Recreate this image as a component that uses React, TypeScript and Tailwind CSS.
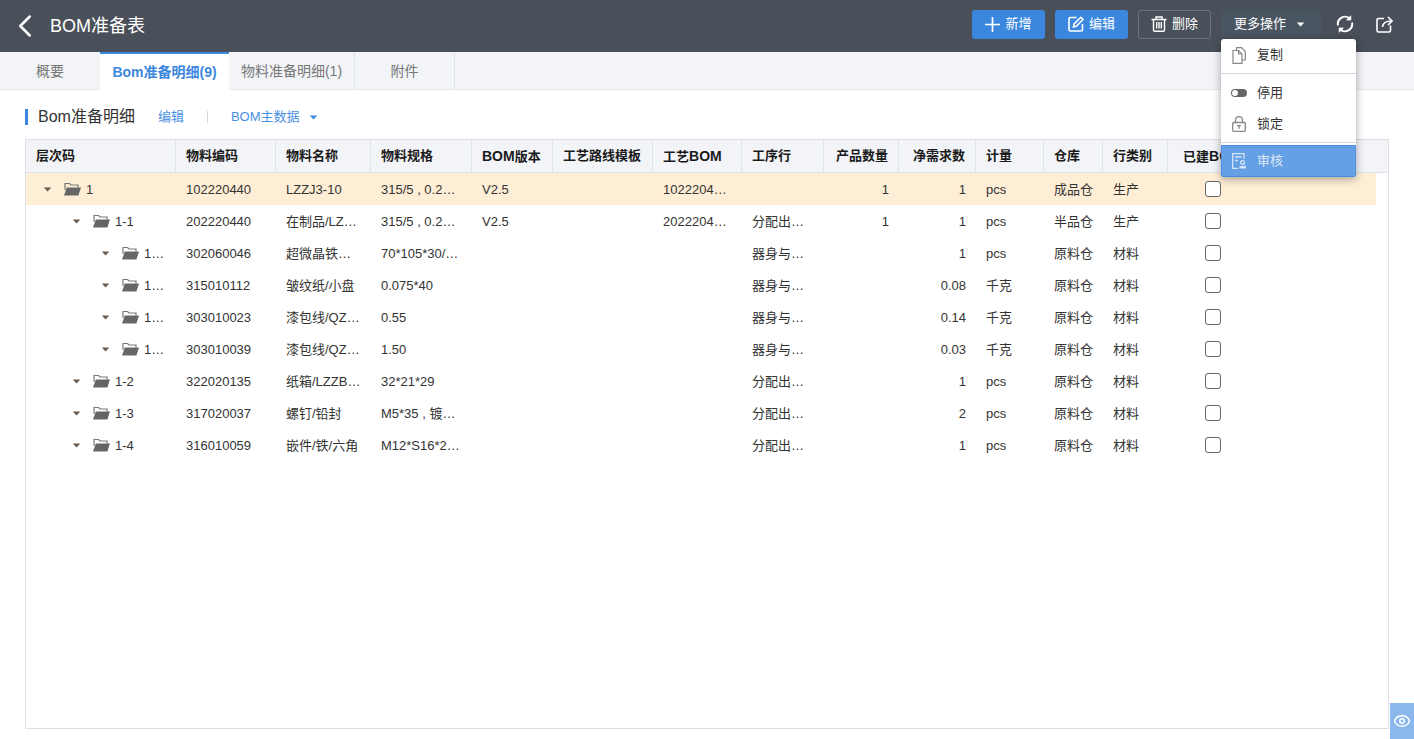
import { ChevronLeft, Eye } from 'lucide-react';

type Col = { label: string; key: string; width: string; right?: boolean };

const cols: Col[] = [
  { label: '物料编码', key: 'code', width: 'w-[100px]' },
  { label: '物料名称', key: 'name', width: 'w-[95px]' },
  { label: '物料规格', key: 'spec', width: 'w-[101px]' },
  { label: 'BOM版本', key: 'ver', width: 'w-[81px]' },
  { label: '工艺路线模板', key: 'route', width: 'w-[100px]' },
  { label: '工艺BOM', key: 'bom', width: 'w-[89px]' },
  { label: '工序行', key: 'proc', width: 'w-[82px]' },
  { label: '产品数量', key: 'qty', width: 'w-[75px]', right: true },
  { label: '净需求数', key: 'need', width: 'w-[77px]', right: true },
  { label: '计量', key: 'unit', width: 'w-[68px]' },
  { label: '仓库', key: 'wh', width: 'w-[59px]' },
  { label: '行类别', key: 'type', width: 'w-[65px]' },
];

type Row = Record<string, string> & { level: string };

const rows: Row[] = [
  { level: '1', tree: '1', code: '102220440', name: 'LZZJ3-10', spec: '315/5 , 0.25kV', ver: 'V2.5', route: '', bom: '102220440-1', proc: '', qty: '1', need: '1', unit: 'pcs', wh: '成品仓', type: '生产' },
  { level: '2', tree: '1-1', code: '202220440', name: '在制品/LZZJ3-10', spec: '315/5 , 0.25kV', ver: 'V2.5', route: '', bom: '202220440-1', proc: '分配出线装配', qty: '1', need: '1', unit: 'pcs', wh: '半品仓', type: '生产' },
  { level: '3', tree: '1-1-1', code: '302060046', name: '超微晶铁芯/环形', spec: '70*105*30/1K107', ver: '', route: '', bom: '', proc: '器身与铁芯装配', qty: '', need: '1', unit: 'pcs', wh: '原料仓', type: '材料' },
  { level: '3', tree: '1-1-2', code: '315010112', name: '皱纹纸/小盘', spec: '0.075*40', ver: '', route: '', bom: '', proc: '器身与铁芯装配', qty: '', need: '0.08', unit: '千克', wh: '原料仓', type: '材料' },
  { level: '3', tree: '1-1-3', code: '303010023', name: '漆包线/QZ-2/130', spec: '0.55', ver: '', route: '', bom: '', proc: '器身与铁芯装配', qty: '', need: '0.14', unit: '千克', wh: '原料仓', type: '材料' },
  { level: '3', tree: '1-1-4', code: '303010039', name: '漆包线/QZ-2/130', spec: '1.50', ver: '', route: '', bom: '', proc: '器身与铁芯装配', qty: '', need: '0.03', unit: '千克', wh: '原料仓', type: '材料' },
  { level: '2', tree: '1-2', code: '322020135', name: '纸箱/LZZB-10', spec: '32*21*29', ver: '', route: '', bom: '', proc: '分配出线装配', qty: '', need: '1', unit: 'pcs', wh: '原料仓', type: '材料' },
  { level: '2', tree: '1-3', code: '317020037', name: '螺钉/铅封', spec: 'M5*35 , 镀锌件', ver: '', route: '', bom: '', proc: '分配出线装配', qty: '', need: '2', unit: 'pcs', wh: '原料仓', type: '材料' },
  { level: '2', tree: '1-4', code: '316010059', name: '嵌件/铁/六角', spec: 'M12*S16*20*8', ver: '', route: '', bom: '', proc: '分配出线装配', qty: '', need: '1', unit: 'pcs', wh: '原料仓', type: '材料' },
];

const indents: Record<string, string> = {
  '1': 'pl-[17px]',
  '2': 'pl-[46px]',
  '3': 'pl-[75px]',
};

// the BOM letters in the header run wider than the 13px hanzi next to them
function HeaderLabel({ text }: { text: string }) {
  if (!text.includes('BOM')) return <>{text}</>;
  const [before, after] = text.split('BOM');
  return (
    <>
      {before}
      <span className="text-[14px]">BOM</span>
      {after}
    </>
  );
}

function Caret({ className }: { className: string }) {
  return (
    <svg viewBox="0 0 10 6" className={className} fill="currentColor">
      <path d="M0.5 0.5h9L5 5.5z" />
    </svg>
  );
}

function PlusIcon() {
  return (
    <svg viewBox="0 0 15 15" className="h-[15px] w-[15px]" fill="none" stroke="currentColor" strokeWidth="1.7">
      <path d="M7.5 0v15M0 7.5h15" />
    </svg>
  );
}

function EditIcon() {
  return (
    <svg viewBox="0 0 16 16" className="h-[16px] w-[16px]" fill="none" stroke="currentColor" strokeWidth="1.6">
      <path d="M8.500 1.500H2.500a1.500 1.500 0 0 0-1.500 1.500v10.500a1.500 1.500 0 0 0 1.500 1.500H13a1.500 1.500 0 0 0 1.500-1.500V8" />
      <path d="M5.500 11l.6-3L12.800 1.300l2.200 2.200L8.300 10.300z" />
    </svg>
  );
}

function TrashIcon() {
  return (
    <svg viewBox="0 0 16 16" className="h-[16px] w-[16px]" fill="none" stroke="currentColor" strokeWidth="1.400">
      <path d="M0.500 3.500h15M5 3.500V1h6v2.500" />
      <path d="M2.500 3.500v10.500a1.300 1.300 0 0 0 1.300 1.300h8.400a1.300 1.300 0 0 0 1.300-1.300V3.500" />
      <path d="M5.700 6v6.500M8 6v6.500M10.300 6v6.500" />
    </svg>
  );
}

function RefreshIcon() {
  return (
    <svg viewBox="0 0 18 18" className="h-[18px] w-[18px]" fill="none" stroke="currentColor" strokeWidth="1.900">
      <path d="M2 10.500A7.200 7.200 0 0 1 13.500 3.300" />
      <path d="M16 7.500A7.200 7.200 0 0 1 4.500 14.700" />
      <path d="M14.800 0.800v4.200h-4.200z" fill="currentColor" strokeWidth="0.800" />
      <path d="M3.200 17.200v-4.200h4.200z" fill="currentColor" strokeWidth="0.800" />
    </svg>
  );
}

function ExportIcon() {
  return (
    <svg viewBox="0 0 17 17" className="h-[17px] w-[17px]" fill="none" stroke="currentColor" strokeWidth="1.600">
      <path d="M8 2.500H2.500A1.500 1.500 0 0 0 1 4v10.500A1.500 1.500 0 0 0 2.500 16H13a1.500 1.500 0 0 0 1.500-1.500V9.500" />
      <path d="M6.500 11c.3-3.800 3-6 9-6" />
      <path d="M12 1l4 4-4 4" />
    </svg>
  );
}

function FolderIcon() {
  return (
    <svg viewBox="0 0 17 14" className="h-[14px] w-[17px] shrink-0">
      <path d="M1 8V1.500h4.500l1.500 1.500h7v2.500" fill="none" stroke="#777" strokeWidth="1.200" />
      <path d="M0 13.500 2.800 5.500H17l-2.600 8z" fill="#666" />
    </svg>
  );
}

function CopyIcon() {
  return (
    <svg viewBox="0 0 14 17" className="h-[17px] w-[14px]" fill="none" stroke="#888" strokeWidth="1.200">
      <path d="M4.500 3V0.700H9.500L13.300 4.500V13H10" />
      <path d="M1 3.500H6.500L10 7V16.300H1z" />
      <path d="M6.500 3.500V7H10" />
    </svg>
  );
}

function ToggleIcon() {
  return (
    <svg viewBox="0 0 16 8" className="h-[8px] w-[16px]">
      <rect x="0" y="0" width="16" height="8" rx="4" fill="#666" />
      <circle cx="4" cy="4" r="3" fill="#fff" />
    </svg>
  );
}

function LockIcon() {
  return (
    <svg viewBox="0 0 14 16" className="h-[16px] w-[14px]" fill="none" stroke="#888" strokeWidth="1.300">
      <path d="M3.500 6.500V4a3.500 3.500 0 0 1 7 0v2.500" />
      <rect x="0.700" y="6.500" width="12.600" height="8.800" rx="1" />
      <path d="M5 9.700h4M7 9.700v3" />
    </svg>
  );
}

function AuditIcon() {
  return (
    <svg viewBox="0 0 15 16" className="h-[16px] w-[15px]" fill="none" stroke="#d6e4f7" strokeWidth="1.300">
      <path d="M12 6V0.700H0.700V15.300H6" />
      <path d="M3 4h6.500M3 7.500h3" />
      <circle cx="10.500" cy="9.500" r="1.900" />
      <path d="M7.500 15.500V13h6.500v2.500z" fill="#d6e4f7" stroke="none" />
    </svg>
  );
}

export default function App() {
  return (
    <div className="relative flex h-screen w-full flex-col overflow-hidden bg-white font-['Liberation_Sans','Noto_Sans_CJK_SC',sans-serif] text-[13px] text-[#333]">
      <header className="flex h-[52px] shrink-0 items-center bg-[#4a5059] text-white">
        <ChevronLeft className="ml-[6px] h-[38px] w-[38px]" strokeWidth={1.6} />
        <h1 className="ml-[6px] text-[18px]">BOM准备表</h1>
        <div className="ml-auto flex items-center gap-[10px] pb-[4px]">
          <button className="flex h-[29px] w-[73px] items-center justify-center gap-[5px] rounded-[3px] bg-[#3c87de]">
            <PlusIcon />
            新增
          </button>
          <button className="flex h-[29px] w-[73px] items-center justify-center gap-[5px] rounded-[3px] bg-[#3c87de]">
            <EditIcon />
            编辑
          </button>
          <button className="flex h-[29px] w-[73px] items-center justify-center gap-[5px] rounded-[3px] border border-[#6c737c]">
            <TrashIcon />
            删除
          </button>
          <button className="flex h-[29px] w-[100px] items-center justify-center gap-[10px] rounded-[3px] bg-[#4a5562] pr-[3px]">
            更多操作
            <Caret className="h-[5px] w-[9px]" />
          </button>
          <div className="ml-[5px]">
            <RefreshIcon />
          </div>
          <div className="ml-[12px] mr-[21px]">
            <ExportIcon />
          </div>
        </div>
      </header>

      <nav className="flex h-[38px] shrink-0 border-b border-[#e6e8ee] bg-[#f2f4f8] text-[14px] text-[#777]">
        <div className="flex w-[100px] items-center justify-center pt-[2px]">概要</div>
        <div className="mb-[-1px] flex w-[129px] items-center justify-center border-t-2 border-[#3c87de] bg-white font-bold text-[#3c87de]">Bom准备明细(9)</div>
        <div className="flex w-[126px] items-center justify-center border-r border-[#dfe2e8] pt-[2px]">物料准备明细(1)</div>
        <div className="flex w-[100px] items-center justify-center border-r border-[#dfe2e8] pt-[2px]">附件</div>
      </nav>

      <div className="flex h-[49px] shrink-0 items-center pl-[25px] pt-[5px]">
        <span className="h-[16px] w-[3px] bg-[#3c87de]" />
        <span className="ml-[10px] text-[16px] leading-none">Bom准备明细</span>
        <span className="ml-[23px] text-[#4a90e2]">编辑</span>
        <span className="ml-[23px] h-[12px] w-px bg-[#d5d8de]" />
        <span className="ml-[23px] text-[#4a90e2]">BOM主数据</span>
        <Caret className="ml-[9px] h-[5px] w-[9px] text-[#3c87de]" />
      </div>

      <div className="mx-[25px] mb-[10px] min-h-0 flex-1 border border-[#dcdfe6]">
        <div className="flex h-[33px] border-b border-[#dfe2e8] bg-[#f2f4f8] font-bold text-[#1a1a1a]">
          <div className="flex w-[150px] shrink-0 items-center border-r border-[#dfe2e8] px-[10px]">层次码</div>
          {cols.map((c) => (
            <div
              key={c.key}
              className={`flex shrink-0 items-center border-r border-[#dfe2e8] px-[10px] ${c.width} ${c.right ? 'justify-end' : ''}`}
            >
              <span>
                <HeaderLabel text={c.label} />
              </span>
            </div>
          ))}
          <div className="flex flex-1 items-center whitespace-nowrap pl-[15px]">
            <span>
              <HeaderLabel text="已建BOM" />
            </span>
          </div>
        </div>
        {rows.map((r, i) => (
          <div key={r.code} className={`flex h-[32px] w-[1350px] items-center ${i === 0 ? 'bg-[#feeed5]' : ''}`}>
            <div className={`flex w-[150px] shrink-0 items-center pr-[10px] ${indents[r.level]}`}>
              <Caret className="h-[5px] w-[9px] shrink-0 text-[#6b5a4e]" />
              <div className="ml-[12px]">
                <FolderIcon />
              </div>
              <span className="ml-[5px] truncate pt-[2px]">{r.tree}</span>
            </div>
            {cols.map((c) => (
              <div key={c.key} className={`shrink-0 truncate px-[10px] pt-[2px] ${c.width} ${c.right ? 'text-right' : ''}`}>
                {r[c.key]}
              </div>
            ))}
            <div className="ml-[37px] h-[16px] w-[16px] rounded-[3px] border border-[#666] bg-white" />
          </div>
        ))}
      </div>

      <div className="absolute left-[1221px] top-[39px] w-[135px] rounded-[3px] bg-white text-[#333] shadow-[0_2px_8px_rgba(0,0,0,0.35)]">
        <div className="flex h-[35px] items-center gap-[11px] border-b border-[#d5d7db] pb-[2px] pl-[11px]">
          <CopyIcon />
          复制
        </div>
        <div className="flex h-[36px] items-center gap-[10px] pl-[10px] pt-[1px]">
          <ToggleIcon />
          停用
        </div>
        <div className="flex h-[30px] items-center gap-[11px] pb-[2px] pl-[11px]">
          <LockIcon />
          锁定
        </div>
        <div className="mt-[2px] border-t border-[#d5d7db] pt-[2px]">
          <div className="flex h-[32px] items-center gap-[10px] rounded-b-[2px] border border-[#4a90e2] bg-[#659fe4] pl-[10px] text-[#d9e6f7]">
            <AuditIcon />
            审核
          </div>
        </div>
      </div>

      <div className="absolute bottom-0 right-0 flex h-[36px] w-[24px] items-center justify-center bg-[#8ab8ec] text-white">
        <Eye className="h-[18px] w-[18px]" strokeWidth={2} />
      </div>
    </div>
  );
}
